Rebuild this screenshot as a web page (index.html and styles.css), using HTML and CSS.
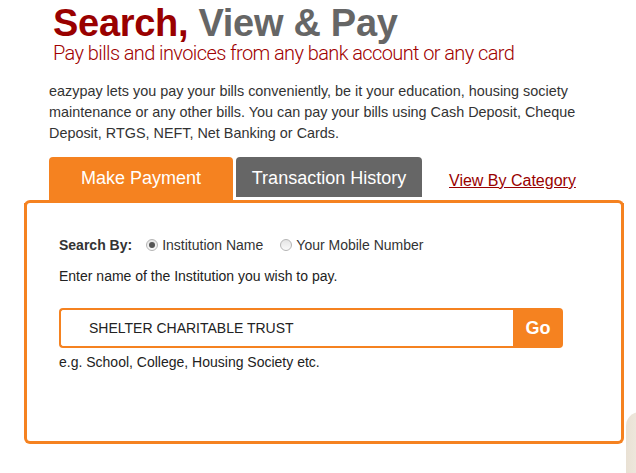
FILE: index.html
```html
<!DOCTYPE html>
<html lang="en">

<head>
    <meta charset="UTF-8">
    <meta name="viewport" content="width=device-width, initial-scale=1.0">
    <title>eazypay</title>
    <link rel="stylesheet" href="styles.css">
</head>

<body>
    <div id="page">
        <h1 class="title"><span class="red">Search,</span> View &amp; Pay</h1>
        <p class="tagline">Pay bills and invoices from any bank account or any card</p>
        <p class="intro">eazypay lets you pay your bills conveniently, be it your education, housing society
            maintenance or any other bills. You can pay your bills using Cash Deposit, Cheque
            Deposit, RTGS, NEFT, Net Banking or Cards.</p>

        <div id="tabs">
            <a href="javascript:;" class="tab on">Make Payment</a>
            <a href="javascript:;" class="tab">Transaction History</a>
            <a href="javascript:;" class="cat">View By Category</a>
        </div>

        <div id="box">
            <div class="search-by">
                <b>Search By:</b>
                <label class="radio"><span class="dot checked"></span>Institution Name</label>
                <label class="radio"><span class="dot"></span>Your Mobile Number</label>
            </div>
            <p class="hint">Enter name of the Institution you wish to pay.</p>
            <div class="field">
                <input type="text" value="SHELTER CHARITABLE TRUST">
                <button>Go</button>
            </div>
            <p class="example">e.g. School, College, Housing Society etc.</p>
        </div>
    </div>
    <!-- cup picture peeking in at the right edge -->
    <div class="cup"></div>
</body>

</html>
```

FILE: styles.css
```css
body {
    margin: 0;
    font-family: "Liberation Sans", Arial, sans-serif;
    color: #333;
    background: #fff;
}

#page {
    padding-left: 24px;
    width: 600px;
}

.title {
    margin: 3px 0 0 29px;
    font-size: 38px;
    line-height: 40px;
    font-weight: bold;
    color: #666;
    letter-spacing: -0.3px;
}

.title .red {
    color: #990000;
}

.tagline {
    margin: -2px 0 0 29px;
    font-family: Roboto, "Liberation Sans", sans-serif;
    font-weight: 300;
    font-size: 20px;
    line-height: 24px;
    letter-spacing: -0.6px;
    color: #a00000;
}

.intro {
    margin: 16px 0 0 25px;
    width: 550px;
    font-size: 14.4px;
    line-height: 21px;
    color: #333;
}

#tabs {
    display: flex;
    align-items: flex-start;
    margin: 13px 0 0 25px;
}

.tab {
    width: 186px;
    height: 40px;
    margin-right: 3px;
    background: #666;
    border-radius: 4px 4px 0 0;
    color: #fff;
    font-size: 18px;
    line-height: 43px;
    text-align: center;
    text-decoration: none;
}

/* active tab runs down over the box's top border */
.tab.on {
    width: 184px;
    height: 46px;
    background: #f58220;
}

.cat {
    margin: 15px 0 0 24px;
    font-size: 16px;
    color: #990000;
    text-decoration: underline;
}

#box {
    height: 238px;
    border: 3px solid #f58220;
    border-top: 0;
    border-radius: 0 0 6px 6px;
    padding: 0 0 0 32px;
    position: relative;
}

#box::before {
    content: "";
    position: absolute;
    left: -3px;
    right: -3px;
    top: -3px;
    height: 8px;
    border: 3px solid #f58220;
    border-bottom: 0;
    border-radius: 6px 6px 0 0;
}

.search-by {
    display: flex;
    align-items: center;
    padding-top: 34px;
    font-size: 14px;
    color: #333;
}

.search-by b {
    margin-right: 14px;
}

.radio {
    display: flex;
    align-items: center;
    margin-right: 17px;
}

.dot {
    width: 10px;
    height: 10px;
    margin-right: 4px;
    border: 1px solid #b5b5b5;
    border-radius: 50%;
    background: linear-gradient(#e4e4e4, #fafafa);
    position: relative;
}

.dot.checked::after {
    content: "";
    position: absolute;
    left: 2px;
    top: 2px;
    width: 6px;
    height: 6px;
    border-radius: 50%;
    background: #555;
}

.hint {
    margin: 15px 0 0;
    font-size: 14px;
    line-height: 17px;
    color: #222;
}

.field {
    display: flex;
    width: 504px;
    height: 40px;
    margin-top: 23px;
}

.field input {
    flex: 1;
    box-sizing: border-box;
    height: 40px;
    margin: 0;
    padding: 0 0 0 28px;
    border: 2px solid #f58220;
    border-right: 0;
    border-radius: 4px 0 0 4px;
    font-family: "Liberation Sans", Arial, sans-serif;
    font-size: 14px;
    color: #222;
    outline: none;
}

.field button {
    width: 50px;
    height: 40px;
    margin: 0;
    border: 0;
    border-radius: 0 4px 4px 0;
    background: #f58220;
    color: #fff;
    font-family: "Liberation Sans", Arial, sans-serif;
    font-size: 18px;
    font-weight: bold;
    cursor: pointer;
}

.example {
    margin: 6px 0 0;
    font-size: 14px;
    line-height: 17px;
    color: #222;
}

.cup {
    position: absolute;
    left: 626px;
    top: 412px;
    width: 30px;
    height: 70px;
    border-radius: 14px 0 0 0;
    background: linear-gradient(90deg, #e9e1d4, #f6f1ea);
}
```
